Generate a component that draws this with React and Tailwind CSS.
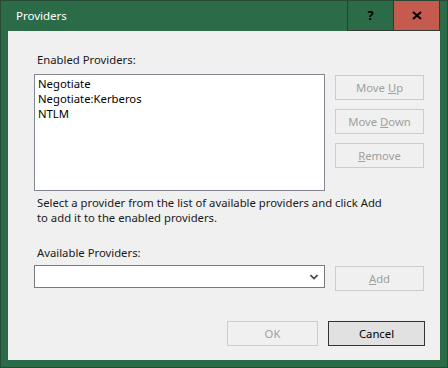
import React from "react";

const font = { fontFamily: '"Noto Sans", "Liberation Sans", sans-serif' };

function Btn({ children, className = "" }) {
  return (
    <div
      className={
        "flex items-center justify-center border border-[#cccccc] bg-[#f0f0f0] text-[#a0a0a0] text-[11.3px] leading-none " +
        className
      }
    >
      {children}
    </div>
  );
}

export default function App() {
  return (
    <div
      className="w-[448px] h-[368px] bg-[#2c6b47] border border-[#264a36] flex flex-col text-[11.3px]"
      style={font}
    >
      <div className="h-[30px] flex items-stretch">
        <div className="flex-1 flex items-center pl-[15px] text-white text-[11.5px]">Providers</div>
        <div className="w-[47px] border border-[#2f3b33] border-t-0 flex items-center justify-center text-black font-bold text-[13px]">
          ?
        </div>
        <div className="w-[46px] bg-[#c55b4f] border border-[#2f3b33] border-t-0 border-l-0 flex items-center justify-center">
          <svg width="10" height="9" viewBox="0 0 10 9">
            <path d="M1 1 L9 8 M9 1 L1 8" stroke="#000" strokeWidth="2" />
          </svg>
        </div>
        <div className="w-[7px]" />
      </div>
      <div className="ml-[7px] w-[432px] h-[329px] bg-[#f0f0f0] flex flex-col pl-[26px] text-[#000]">
        <div className="mt-[21px] ml-[3px] leading-[15px] text-[#1a1a1a]">Enabled Providers:</div>
        <div className="mt-[7px] flex">
          <div className="w-[291px] h-[117px] bg-white border border-[#828790] pl-[3px] pt-[1px] leading-[15px]">
            <div>Negotiate</div>
            <div>Negotiate:Kerberos</div>
            <div>NTLM</div>
          </div>
          <div className="ml-[10px] mt-[1px] flex flex-col gap-[9px]">
            <Btn className="w-[89px] h-[25px]">
              Move <span className="underline ml-[3px]">U</span>p
            </Btn>
            <Btn className="w-[89px] h-[25px]">
              Move <span className="underline ml-[3px]">D</span>own
            </Btn>
            <Btn className="w-[89px] h-[25px]">
              <span className="underline">R</span>emove
            </Btn>
          </div>
        </div>
        <div className="mt-[4px] ml-[3px] leading-[15px] text-[#1a1a1a]">
          <div>Select a provider from the list of available providers and click Add</div>
          <div>to add it to the enabled providers.</div>
        </div>
        <div className="mt-[20px] ml-[3px] leading-[15px] text-[#1a1a1a]">Available Providers:</div>
        <div className="mt-[5px] flex">
          <div className="w-[291px] h-[23px] bg-white border border-[#7a7a7a] flex items-center justify-end pr-[6px]">
            <svg width="8" height="6" viewBox="0 0 8 6">
              <path d="M0.5 1 L4 4.5 L7.5 1" stroke="#444" strokeWidth="1.6" fill="none" />
            </svg>
          </div>
          <Btn className="ml-[10px] mt-[1px] w-[89px] h-[25px]">
            <span className="underline">A</span>dd
          </Btn>
        </div>
        <div className="mt-[30px] flex justify-end pr-[15px] gap-[10px]">
          <Btn className="w-[91px] h-[25px]">OK</Btn>
          <div className="w-[97px] h-[25px] border border-[#333333] bg-[#e1e1e1] flex items-center justify-center text-[11.3px] leading-none text-black">
            Cancel
          </div>
        </div>
      </div>
    </div>
  );
}
